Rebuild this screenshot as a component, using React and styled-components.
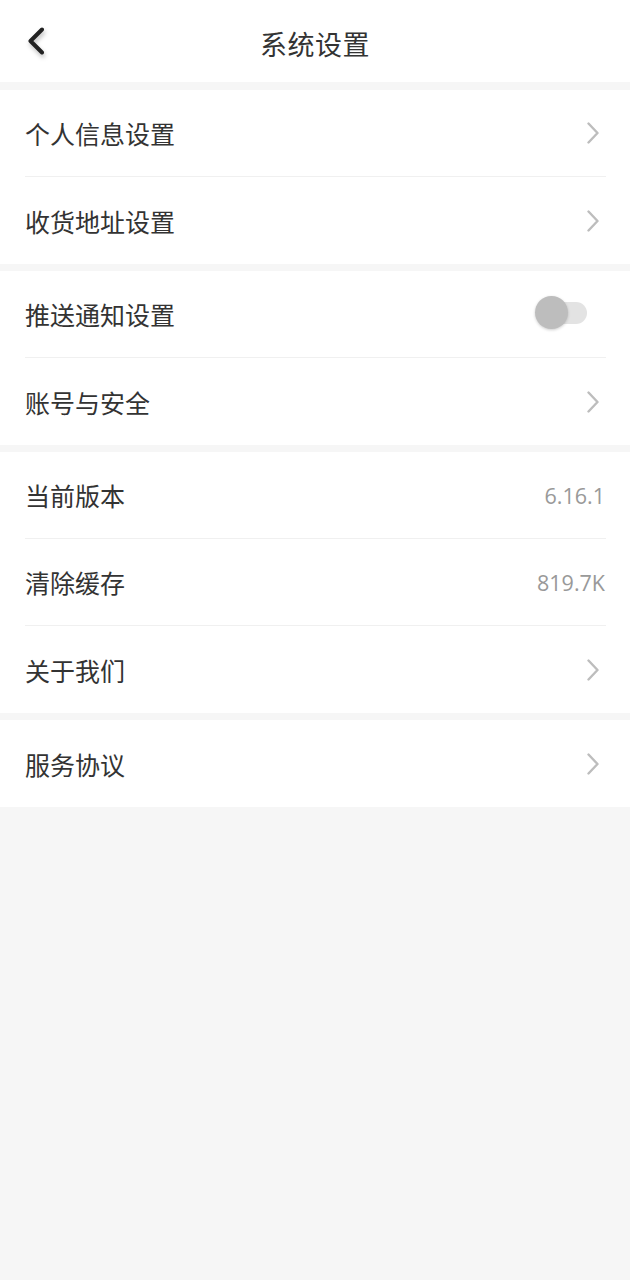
import React from 'react';
import styled, { createGlobalStyle } from 'styled-components';

const GlobalStyle = createGlobalStyle`
    html, body {
        margin: 0;
        padding: 0;
        background: #f6f6f6;
    }
    body {
        font-family: "Noto Sans CJK SC", "Noto Sans", sans-serif;
        color: #333;
    }
`;

const Page = styled.div`
    min-height: 1280px;
    background: #f6f6f6;
`;

const Header = styled.div`
    height: 82px;
    background: #fff;
    display: grid;
    grid-template-columns: 1fr auto 1fr;
    align-items: center;
`;

const BackButton = styled.div`
    display: flex;
    align-items: center;
    padding-left: 26px;
    filter: drop-shadow(1px 3px 2px rgba(0, 0, 0, 0.25));
`;

const Title = styled.div`
    font-size: 27px;
    color: #333;
    letter-spacing: 0.5px;
    margin-top: 4px;
`;

const Group = styled.div`
    background: #fff;
    margin-top: ${props => props.gap || 7}px;
`;

const Row = styled.div`
    height: 87px;
    box-sizing: border-box;
    margin: 0 24px 0 25px;
    display: flex;
    align-items: center;
    justify-content: space-between;
    border-bottom: ${props => props.last ? 'none' : '1px solid #f0f0f0'};
`;

const Label = styled.div`
    font-size: 25px;
    color: #333;
`;

const Value = styled.div`
    font-family: "Open Sans", "Noto Sans", sans-serif;
    font-size: 21.5px;
    color: #999;
    margin-right: 1px;
`;

const Toggle = styled.div`
    display: flex;
    align-items: center;
    margin-right: 19px;
    margin-top: -3px;
`;

const Knob = styled.div`
    width: 33px;
    height: 33px;
    border-radius: 50%;
    background: #bdbdbd;
    box-shadow: 0 1px 3px rgba(0, 0, 0, 0.2);
    z-index: 1;
`;

const Track = styled.div`
    width: 36px;
    height: 22px;
    margin-left: -17px;
    border-radius: 11px;
    background: #e3e3e3;
`;

const Chevron = () => (
    <svg width="14" height="22" viewBox="0 0 14 22" style={ { marginRight: 6 } }>
        <path d="M2.5 1.5 L11.5 11 L2.5 20.5" fill="none" stroke="#bdbdbd" strokeWidth="2.4" strokeLinecap="round" strokeLinejoin="round" />
    </svg>
);

const BackIcon = () => (
    <svg width="20" height="28" viewBox="0 0 20 28">
        <path d="M16 2.5 L4.5 14 L16 25.5" fill="none" stroke="#222" strokeWidth="4" strokeLinecap="round" strokeLinejoin="round" />
    </svg>
);

const groups = [
    [
        { label: '个人信息设置', type: 'arrow' },
        { label: '收货地址设置', type: 'arrow' }
    ],
    [
        { label: '推送通知设置', type: 'toggle' },
        { label: '账号与安全', type: 'arrow' }
    ],
    [
        { label: '当前版本', type: 'value', value: '6.16.1' },
        { label: '清除缓存', type: 'value', value: '819.7K' },
        { label: '关于我们', type: 'arrow' }
    ],
    [
        { label: '服务协议', type: 'arrow' }
    ]
];

const renderRight = (item) => {
    if(item.type === 'toggle') {
        return (
            <Toggle>
                <Knob />
                <Track />
            </Toggle>
        );
    }
    if(item.type === 'value') {
        return <Value>{ item.value }</Value>;
    }
    return <Chevron />;
};

export default function App() {
    return (
        <Page>
            <GlobalStyle />
            <Header>
                <BackButton>
                    <BackIcon />
                </BackButton>
                <Title>系统设置</Title>
                <div />
            </Header>
            { groups.map((group, gi) => (
                <Group key={ gi } gap={ gi === 0 ? 8 : 7 }>
                    { group.map((item, i) => (
                        <Row key={ item.label } last={ i === group.length - 1 }>
                            <Label>{ item.label }</Label>
                            { renderRight(item) }
                        </Row>
                    )) }
                </Group>
            )) }
        </Page>
    );
}
